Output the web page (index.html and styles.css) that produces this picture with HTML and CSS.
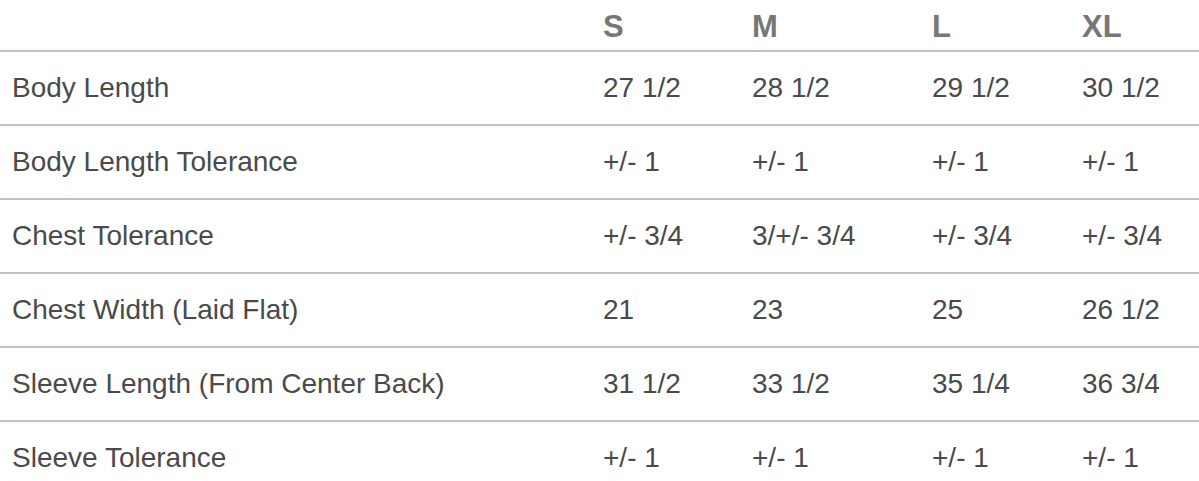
FILE: index.html
```html
<!DOCTYPE html>
<html>
<head>
<meta charset="utf-8">
<link rel="stylesheet" href="styles.css">
</head>
<body>
<div class="size-table">
  <div class="row head">
    <div class="cell"></div>
    <div class="cell">S</div>
    <div class="cell">M</div>
    <div class="cell">L</div>
    <div class="cell">XL</div>
  </div>
  <div class="row">
    <div class="cell">Body Length</div>
    <div class="cell">27 1/2</div>
    <div class="cell">28 1/2</div>
    <div class="cell">29 1/2</div>
    <div class="cell">30 1/2</div>
  </div>
  <div class="row">
    <div class="cell">Body Length Tolerance</div>
    <div class="cell">+/- 1</div>
    <div class="cell">+/- 1</div>
    <div class="cell">+/- 1</div>
    <div class="cell">+/- 1</div>
  </div>
  <div class="row">
    <div class="cell">Chest Tolerance</div>
    <div class="cell">+/- 3/4</div>
    <div class="cell">3/+/- 3/4</div>
    <div class="cell">+/- 3/4</div>
    <div class="cell">+/- 3/4</div>
  </div>
  <div class="row">
    <div class="cell">Chest Width (Laid Flat)</div>
    <div class="cell">21</div>
    <div class="cell">23</div>
    <div class="cell">25</div>
    <div class="cell">26 1/2</div>
  </div>
  <div class="row">
    <div class="cell">Sleeve Length (From Center Back)</div>
    <div class="cell">31 1/2</div>
    <div class="cell">33 1/2</div>
    <div class="cell">35 1/4</div>
    <div class="cell">36 3/4</div>
  </div>
  <div class="row">
    <div class="cell">Sleeve Tolerance</div>
    <div class="cell">+/- 1</div>
    <div class="cell">+/- 1</div>
    <div class="cell">+/- 1</div>
    <div class="cell">+/- 1</div>
  </div>
</div>
</body>
</html>
```

FILE: styles.css
```css
html, body {
  margin: 0;
  padding: 0;
  background: #ffffff;
}

body {
  font-family: "Liberation Sans", Arial, Helvetica, sans-serif;
  font-size: 28px;
  color: #4a4a4a;
  overflow: hidden;
}

.size-table {
  width: 1199px;
}

.row {
  display: grid;
  grid-template-columns: 591px 149px 180px 150px 1fr;
  align-items: center;
  box-sizing: border-box;
  height: 74px;
  border-top: 2px solid #c3c3c3;
}

.row.head {
  height: 50px;
  padding-top: 3px;
  border-top: none;
  font-size: 31px;
  font-weight: bold;
  color: #777777;
}

.cell {
  padding-left: 12px;
  white-space: nowrap;
}
```
